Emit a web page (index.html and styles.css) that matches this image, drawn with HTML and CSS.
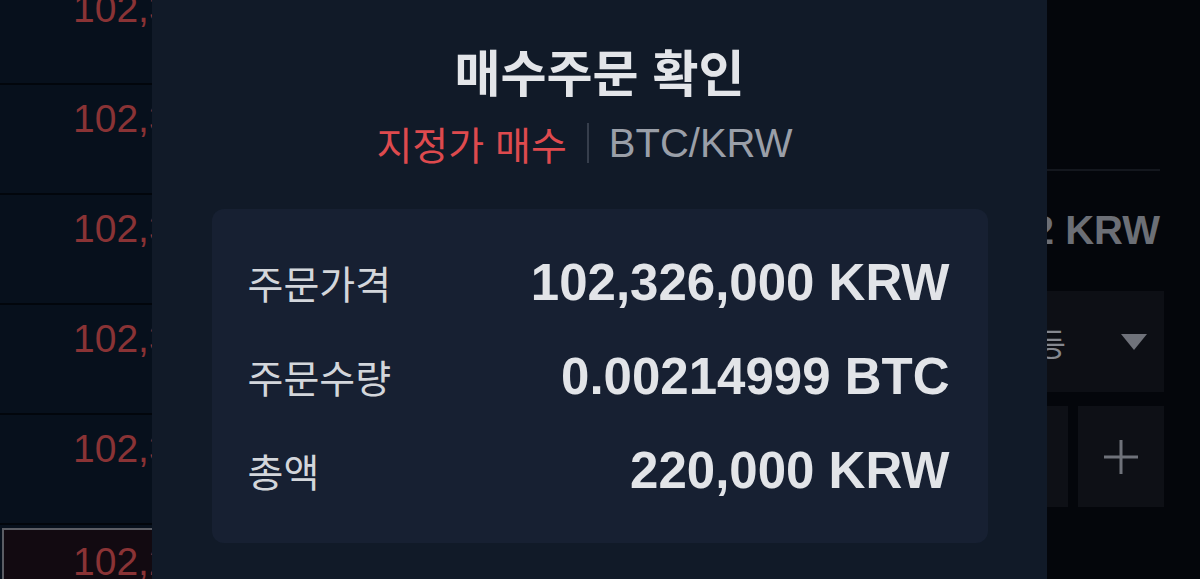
FILE: index.html
```html
<!DOCTYPE html>
<html lang="ko">
<head>
    <meta charset="UTF-8">
    <meta name="viewport" content="width=device-width, initial-scale=1.0">
    <title>매수주문 확인</title>
    <link rel="stylesheet" href="styles.css">
</head>
<body>
    <div class="screen">
        <section class="orderbook">
            <div class="book-row"><span class="book-price">102,330,000</span></div>
            <div class="book-row"><span class="book-price">102,329,000</span></div>
            <div class="book-row"><span class="book-price">102,328,000</span></div>
            <div class="book-row"><span class="book-price">102,327,000</span></div>
            <div class="book-row"><span class="book-price">102,326,000</span></div>
            <div class="book-row current">
                <div class="current-box"><span class="book-price">102,225,000</span></div>
            </div>
        </section>

        <section class="order-form">
            <div class="form-divider"></div>
            <div class="form-total">219,992 KRW</div>
            <div class="form-select">
                <span class="select-text">수량 균등</span>
                <span class="select-caret"></span>
            </div>
            <div class="form-stepper">
                <div class="stepper-box wide"></div>
                <div class="stepper-box">
                    <svg width="38" height="38" viewBox="0 0 38 38">
                        <path d="M19 2v34M2 19h34" stroke="#6f727a" stroke-width="3" fill="none"/>
                    </svg>
                </div>
            </div>
        </section>
    </div>

    <div class="modal">
        <h1 class="modal-title">매수주문 확인</h1>
        <div class="modal-sub">
            <span class="sub-type">지정가 매수</span>
            <span class="sub-divider"></span>
            <span class="sub-market">BTC/KRW</span>
        </div>

        <div class="summary">
            <div class="summary-row">
                <span class="summary-label">주문가격</span>
                <span class="summary-value">102,326,000 KRW</span>
            </div>
            <div class="summary-row">
                <span class="summary-label">주문수량</span>
                <span class="summary-value">0.00214999 BTC</span>
            </div>
            <div class="summary-row">
                <span class="summary-label">총액</span>
                <span class="summary-value">220,000 KRW</span>
            </div>
        </div>
    </div>
</body>
</html>
```

FILE: styles.css
```css
body {
    margin: 0;
    width: 1200px;
    height: 579px;
    overflow: hidden;
    position: relative;
    background-color: #04060b;
    font-family: 'Noto Sans CJK KR', 'Liberation Sans', sans-serif;
}
.screen {
    display: flex;
    height: 579px;
}

/* Order book (dimmed behind modal) */
.orderbook {
    width: 152px;
    overflow: hidden;
    background-color: #07101c;
}
.book-row {
    height: 108px;
    border-top: 2px solid #02060c;
    padding-left: 73px;
    white-space: nowrap;
}
.book-row:first-child {
    margin-top: -27px;
}
.book-price {
    display: block;
    padding-top: 14px;
    font-family: 'Liberation Sans', sans-serif;
    font-size: 39px;
    line-height: 40px;
    color: #8a3335;
}
.book-row.current {
    padding-left: 2px;
    padding-top: 3px;
}
.current-box {
    height: 120px;
    border: 2px solid #5b5d64;
    border-right: none;
    background-color: #120a11;
    padding-left: 69px;
}
.current-box .book-price {
    padding-top: 12px;
}

/* Order form (dimmed behind modal) */
.order-form {
    flex: 1;
    display: flex;
    flex-direction: column;
    padding: 169px 36px 0 0;
}
.form-divider {
    height: 2px;
    margin-right: 4px;
    background-color: #14171e;
}
.form-total {
    margin: 35px 4px 0 0;
    text-align: right;
    font-family: 'Liberation Sans', sans-serif;
    font-weight: 700;
    font-size: 40px;
    line-height: 48px;
    color: #6c6f76;
}
.form-select {
    margin-top: 37px;
    height: 101px;
    display: flex;
    align-items: center;
    justify-content: flex-end;
    padding-right: 17px;
    background-color: #0d0f15;
}
.select-text {
    font-size: 32px;
    color: #85888f;
    margin-right: 55px;
}
.select-caret {
    width: 0;
    height: 0;
    border-left: 13px solid transparent;
    border-right: 13px solid transparent;
    border-top: 16px solid #6f727a;
}
.form-stepper {
    margin-top: 14px;
    height: 101px;
    display: flex;
    gap: 10px;
}
.stepper-box {
    width: 86px;
    background-color: #0e1016;
    display: flex;
    align-items: center;
    justify-content: center;
}
.stepper-box.wide {
    flex: 1;
}

/* Confirm modal */
.modal {
    position: absolute;
    top: 0;
    left: 152px;
    width: 895px;
    height: 579px;
    background-color: #111a28;
    display: flex;
    flex-direction: column;
    align-items: center;
    padding-top: 42px;
    box-sizing: border-box;
}
.modal-title {
    margin: 0;
    font-size: 50px;
    line-height: 56px;
    font-weight: 700;
    color: #e3e5e9;
}
.modal-sub {
    margin-top: 21px;
    height: 48px;
    display: flex;
    align-items: center;
    gap: 20px;
    padding-right: 30px;
}
.sub-type {
    font-size: 39px;
    color: #de4a4e;
}
.sub-divider {
    width: 2px;
    height: 40px;
    background-color: #363e4c;
}
.sub-market {
    font-family: 'Liberation Sans', sans-serif;
    font-size: 40px;
    color: #9a9fa8;
}
.summary {
    margin-top: 42px;
    width: 776px;
    box-sizing: border-box;
    padding: 26px 38px 26px 36px;
    border-radius: 12px;
    background-color: #172032;
}
.summary-row {
    height: 94px;
    display: flex;
    align-items: center;
    justify-content: space-between;
}
.summary-label {
    font-size: 39px;
    color: #d3d6db;
}
.summary-value {
    font-family: 'Liberation Sans', sans-serif;
    font-size: 51px;
    font-weight: 700;
    color: #e2e4e8;
}
```
